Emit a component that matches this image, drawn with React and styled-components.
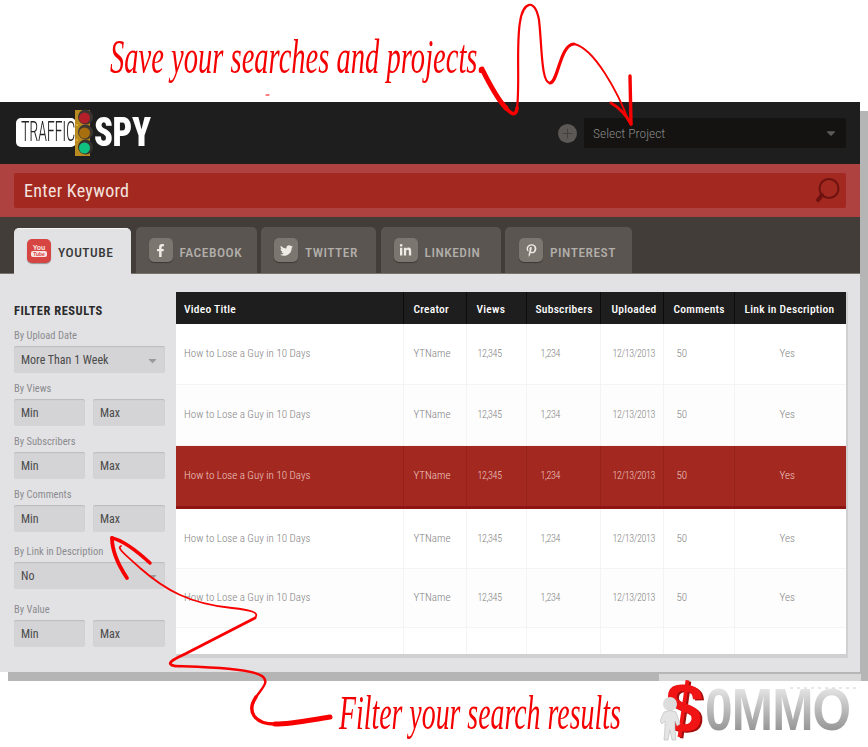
import React from "react";
import styled, { createGlobalStyle } from "styled-components";
import { FaFacebookF, FaTwitter, FaLinkedinIn, FaPinterestP, FaCaretDown } from "react-icons/fa";
import { Plus } from "lucide-react";

const uiFont = `"Roboto", "Lato", sans-serif`;
const handFont = `"Liberation Serif", serif`;

const GlobalStyle = createGlobalStyle`
  html, body { margin: 0; padding: 0; background: #fff; }
  * { box-sizing: border-box; }
`;

const Page = styled.div`
  position: relative;
  width: 868px;
  height: 747px;
  overflow: hidden;
  font-family: ${uiFont};
  font-stretch: 75%;
`;

const TopNote = styled.div`
  height: 102px;
  padding: 33px 0 0 110px;
`;

const HandText = styled.div`
  width: ${(p) => p.width}px;
  color: #f50000;
  font-family: ${handFont};
  font-style: italic;
  font-size: ${(p) => p.size}px;
  line-height: 1;
  white-space: nowrap;
  transform-origin: left center;
  transform: scaleX(${(p) => p.squeeze});
`;

const Panel = styled.div`
  width: 860px;
  height: 570px;
  background: #e2e2e5;
  box-shadow: 8px 9px 0 #b5b5b5;
`;

const Header = styled.header`
  height: 62px;
  background: #1e1e1e;
  display: flex;
  align-items: center;
  padding: 0 14px 0 16px;
`;

const Logo = styled.div`
  display: flex;
  align-items: center;
  height: 47px;
  margin-top: -1px;
`;

const LogoBox = styled.div`
  width: 60px;
  height: 29px;
  background: #fff;
  border-radius: 5px;
  color: #222;
  padding-left: 5px;
`;

const LogoWord = styled.span`
  display: block;
  width: 51px;
  font-size: 27px;
  font-weight: 300;
  line-height: 29px;
  letter-spacing: -0.5px;
  white-space: nowrap;
  transform-origin: left center;
  transform: scaleX(0.61);
`;

const LogoSpy = styled.div`
  width: 57px;
  color: #fff;
  font-weight: 900;
  font-size: 41px;
  letter-spacing: -0.5px;
  line-height: 1;
  transform-origin: left center;
  transform: scaleX(0.84);
`;

const ProjectArea = styled.div`
  margin-left: auto;
  display: flex;
  align-items: center;
  gap: 7px;
`;

const AddButton = styled.div`
  width: 19px;
  height: 19px;
  border-radius: 50%;
  background: #5c5855;
  color: #35312e;
  display: flex;
  align-items: center;
  justify-content: center;
`;

const ProjectSelect = styled.div`
  width: 262px;
  height: 30px;
  background: #141311;
  border-radius: 2px;
  color: #8b8b88;
  font-size: 13.5px;
  font-weight: 300;
  display: flex;
  align-items: center;
  justify-content: space-between;
  padding: 0 8px 0 9px;
`;

const SearchBand = styled.div`
  height: 53px;
  background: #ad4240;
  padding: 9px 14px;
`;

const SearchBox = styled.div`
  height: 35px;
  background: #a32820;
  border-radius: 2px;
  color: #f3e3df;
  font-size: 18px;
  font-weight: 400;
  letter-spacing: 0.3px;
  display: flex;
  align-items: center;
  justify-content: space-between;
  padding: 0 5px 0 10px;
`;

const TabBand = styled.nav`
  height: 57px;
  background: #423d39;
  box-shadow: inset 0 -1px 0 #77736f;
  padding: 11px 0 0 14px;
  display: flex;
  align-items: flex-end;
  gap: 4.5px;
`;

const Tab = styled.div`
  width: ${(p) => p.width}px;
  height: 46px;
  border-radius: 5px 5px 0 0;
  background: ${(p) => (p.active ? "#e2e2e5" : "#5a5551")};
  border-top: ${(p) => (p.active ? "1px solid #f4f4f4" : "none")};
  margin-bottom: ${(p) => (p.active ? 0 : 1)}px;
  color: ${(p) => (p.active ? "#3a3a3a" : "#b2aeaa")};
  display: flex;
  align-items: center;
  gap: 7px;
  padding: 0 0 ${(p) => (p.active ? 2 : 0)}px ${(p) => p.inset}px;
  font-size: 13.5px;
  font-weight: 500;
  letter-spacing: 0.5px;
`;

const TabLabel = styled.span`
  margin-top: 3px;
`;

const TabIcon = styled.div`
  width: 24px;
  height: 24px;
  border-radius: 5px;
  background: ${(p) => (p.active ? "#d64541" : "#7b7670")};
  box-shadow: 0 1px 1px rgba(0, 0, 0, 0.35);
  color: ${(p) => (p.active ? "#fbe5e3" : "#eeebe2")};
  display: flex;
  flex-direction: column;
  align-items: center;
  justify-content: center;
  font-size: 13px;
`;

const YouText = styled.span`
  font-family: "Liberation Sans", sans-serif;
  font-size: 7px;
  font-weight: 700;
  line-height: 7px;
  letter-spacing: 0;
`;

const TubeText = styled.span`
  font-family: "Liberation Sans", sans-serif;
  font-size: 5px;
  font-weight: 700;
  line-height: 6px;
  letter-spacing: 0;
  padding: 0 2px;
  border-radius: 2px;
  background: #fbe5e3;
  color: #d64541;
`;

const Content = styled.div`
  height: 398px;
  display: flex;
`;

const Sidebar = styled.aside`
  width: 176px;
  padding: 29px 11px 0 14px;
`;

const SideTitle = styled.div`
  font-size: 12.5px;
  font-weight: 700;
  letter-spacing: 0.5px;
  line-height: 15px;
  color: #2b2b2b;
  margin-bottom: 11px;
`;

const FilterLabel = styled.div`
  font-size: 10.5px;
  font-weight: 400;
  line-height: 12px;
  height: 17px;
  padding-top: 1px;
  margin-top: ${(p) => p.gap}px;
  color: #8b8b8e;
  white-space: nowrap;
`;

const FieldRow = styled.div`
  display: grid;
  grid-template-columns: 71px 72px;
  column-gap: 8px;
`;

const Field = styled.div`
  height: 27px;
  background: #d4d3d5;
  border-radius: 2px;
  box-shadow: inset 0 1px 1px rgba(0, 0, 0, 0.12);
  color: #4a4a4a;
  font-size: 12px;
  line-height: 29px;
  padding-left: 7px;
`;

const SelectField = styled(Field)`
  display: flex;
  justify-content: space-between;
  align-items: center;
  line-height: 23px;
  padding: 2px 6px 0 7px;
`;

const Caret = styled.span`
  color: ${(p) => p.color};
  display: flex;
  font-size: ${(p) => p.size}px;
`;

const TableWrap = styled.div`
  margin-top: 18px;
  width: 672px;
  height: 366px;
  border-right: 2px solid #d0d0d2;
  border-bottom: 4px solid #d0d0d2;
  background: #fff;
  overflow: hidden;
`;

const Table = styled.table`
  table-layout: fixed;
  width: 670px;
  border-collapse: collapse;
`;

const HeadCell = styled.th`
  height: 32px;
  background: #1e1e1e;
  border-left: 1px solid #0c0c0c;
  color: #fff;
  font-size: 11.5px;
  font-weight: 500;
  letter-spacing: 0.25px;
  text-align: left;
  padding: 1px 0 0 ${(p) => p.pad}px;
  white-space: nowrap;
  overflow: hidden;
  &:first-child { border-left: none; }
`;

const Row = styled.tr`
  height: ${(p) => p.height}px;
  background: ${(p) => (p.selected ? "#a32820" : p.tint ? "#fdfdfd" : "#fff")};
  border-bottom: ${(p) => (p.selected ? "3px solid #8e1512" : "1px solid #f5f3f3")};
`;

const Cell = styled.td`
  border-left: 1px solid ${(p) => (p.selected ? "#96221b" : "#f5f3f3")};
  color: ${(p) => (p.selected ? "#eec9c4" : "#828282")};
  font-size: ${(p) => (p.numeric ? 10 : 11)}px;
  letter-spacing: ${(p) => (p.numeric ? -0.35 : 0)}px;
  font-weight: 300;
  text-align: ${(p) => p.align};
  padding: 0 ${(p) => p.rightPad || 0}px 0 ${(p) => p.pad}px;
  white-space: nowrap;
  &:first-child { border-left: none; }
`;

const Footer = styled.footer`
  height: 75px;
  padding: 17px 0 0 339px;
`;

const Overlay = styled.svg`
  position: absolute;
  left: 0;
  top: 0;
  pointer-events: none;
`;

const SommoLogo = styled.div`
  position: absolute;
  left: 659px;
  top: 674px;
  width: 202px;
  height: 70px;
  background: linear-gradient(#d8d8d8 0 7px, #fff 7px);
`;

const Dollar = styled.span`
  position: absolute;
  left: 5px;
  top: -1px;
  color: #f01414;
  font-family: "Liberation Sans", sans-serif;
  font-weight: 700;
  font-size: 70px;
  line-height: 70px;
  text-shadow: 2px 1px 0 #a50d0d;
  transform: rotate(8deg);
`;

const Ommo = styled.span`
  position: absolute;
  left: 46px;
  top: 2px;
  font-family: "Liberation Sans", sans-serif;
  font-weight: 700;
  font-size: 59px;
  line-height: 68px;
  letter-spacing: -1px;
  white-space: nowrap;
  transform-origin: left center;
  transform: scaleX(0.84);
  background: linear-gradient(#e2e2e2 20%, #b4b4b4 55%, #8f8f8f 85%);
  -webkit-background-clip: text;
  background-clip: text;
  color: transparent;
`;

const Figure = styled.svg`
  position: absolute;
  left: 1px;
  top: 23px;
`;

const columns = [
  { title: "Video Title", width: 227, headPad: 8, pad: 8, align: "left" },
  { title: "Creator", width: 63, headPad: 10, pad: 10, align: "left" },
  { title: "Views", width: 60, headPad: 10, pad: 11, align: "left", numeric: true },
  { title: "Subscribers", width: 74, headPad: 9, pad: 14, align: "left", numeric: true },
  { title: "Uploaded", width: 63, headPad: 11, pad: 12, align: "left", numeric: true },
  { title: "Comments", width: 71, headPad: 10, pad: 13, align: "left" },
  { title: "Link in Description", width: 112, headPad: 10, pad: 0, rightPad: 6, align: "center" },
];

const rowValues = ["How to Lose a Guy in 10 Days", "YTName", "12,345", "1,234", "12/13/2013", "50", "Yes"];

const rows = [
  { height: 60 },
  { height: 61, tint: true },
  { height: 62, selected: true },
  { height: 61 },
  { height: 59, tint: true },
];

const tabs = [
  { name: "YOUTUBE", width: 117, inset: 13, active: true },
  { name: "FACEBOOK", width: 121, inset: 13, icon: <FaFacebookF /> },
  { name: "TWITTER", width: 115, inset: 13, icon: <FaTwitter /> },
  { name: "LINKEDIN", width: 120, inset: 13, icon: <FaLinkedinIn /> },
  { name: "PINTEREST", width: 127, inset: 14, icon: <FaPinterestP /> },
];

const MinMax = () => (
  <FieldRow>
    <Field>Min</Field>
    <Field>Max</Field>
  </FieldRow>
);

const TrafficLight = () => (
  <svg width="19" height="47" viewBox="0 0 19 47" style={{ flex: "none", marginLeft: -1 }}>
    <rect x="0" y="1" width="15" height="46" fill="#b98a1f" />
    <circle cx="10.5" cy="8" r="7.5" fill="#3a3532" />
    <circle cx="10.5" cy="23" r="7.5" fill="#3f3830" />
    <circle cx="10.5" cy="38" r="7.5" fill="#35312e" />
    <circle cx="9.5" cy="9" r="5.5" fill="#b3202a" />
    <circle cx="9.5" cy="24" r="5.5" fill="#a86f10" />
    <circle cx="9.5" cy="39" r="5.5" fill="#10c080" />
    <circle cx="2" cy="16" r="1" fill="#e8b93a" />
    <circle cx="2" cy="31" r="1" fill="#e8b93a" />
  </svg>
);

const SearchIcon = () => (
  <svg width="26" height="26" viewBox="0 0 26 26">
    <circle cx="14" cy="10.5" r="9.5" fill="none" stroke="#6e1210" strokeWidth="2" />
    <path d="M7 17 L3 22" stroke="#6e1210" strokeWidth="4" strokeLinecap="round" />
  </svg>
);

const App = () => (
  <Page>
    <GlobalStyle />
    <TopNote>
      <HandText size={48} squeeze={0.595} width={370}>Save your searches and projects.</HandText>
    </TopNote>

    <Panel>
      <Header>
        <Logo>
          <LogoBox><LogoWord>TRAFFIC</LogoWord></LogoBox>
          <TrafficLight />
          <LogoSpy>SPY</LogoSpy>
        </Logo>
        <ProjectArea>
          <AddButton><Plus size={15} strokeWidth={1} /></AddButton>
          <ProjectSelect>
            Select Project
            <Caret color="#5c5a58" size={14}><FaCaretDown /></Caret>
          </ProjectSelect>
        </ProjectArea>
      </Header>

      <SearchBand>
        <SearchBox>
          Enter Keyword
          <SearchIcon />
        </SearchBox>
      </SearchBand>

      <TabBand>
        {tabs.map((tab) => (
          <Tab key={tab.name} width={tab.width} inset={tab.inset} active={tab.active}>
            <TabIcon active={tab.active}>
              {tab.active ? (
                <>
                  <YouText>You</YouText>
                  <TubeText>Tube</TubeText>
                </>
              ) : (
                tab.icon
              )}
            </TabIcon>
            <TabLabel>{tab.name}</TabLabel>
          </Tab>
        ))}
      </TabBand>

      <Content>
        <Sidebar>
          <SideTitle>FILTER RESULTS</SideTitle>
          <FilterLabel gap={0}>By Upload Date</FilterLabel>
          <SelectField>
            More Than 1 Week
            <Caret color="#9a9a9c" size={13}><FaCaretDown /></Caret>
          </SelectField>
          <FilterLabel gap={9}>By Views</FilterLabel>
          <MinMax />
          <FilterLabel gap={9}>By Subscribers</FilterLabel>
          <MinMax />
          <FilterLabel gap={9}>By Comments</FilterLabel>
          <MinMax />
          <FilterLabel gap={13}>By Link in Description</FilterLabel>
          <SelectField>
            No
            <Caret color="#9a9a9c" size={13}><FaCaretDown /></Caret>
          </SelectField>
          <FilterLabel gap={14}>By Value</FilterLabel>
          <MinMax />
        </Sidebar>

        <TableWrap>
          <Table>
            <colgroup>
              {columns.map((col) => (
                <col key={col.title} style={{ width: col.width }} />
              ))}
            </colgroup>
            <thead>
              <tr>
                {columns.map((col) => (
                  <HeadCell key={col.title} pad={col.headPad}>
                    {col.title}
                  </HeadCell>
                ))}
              </tr>
            </thead>
            <tbody>
              {rows.map((row, i) => (
                <Row key={i} height={row.height} selected={row.selected} tint={row.tint}>
                  {columns.map((col, c) => (
                    <Cell
                      key={col.title}
                      pad={col.pad}
                      rightPad={col.rightPad}
                      align={col.align}
                      numeric={col.numeric}
                      selected={row.selected}
                    >
                      {rowValues[c]}
                    </Cell>
                  ))}
                </Row>
              ))}
              <Row height={27}>
                {columns.map((col) => (
                  <Cell key={col.title} pad={col.pad} align={col.align} />
                ))}
              </Row>
            </tbody>
          </Table>
        </TableWrap>
      </Content>
    </Panel>

    <Footer>
      <HandText size={48} squeeze={0.58} width={285}>Filter your search results</HandText>
    </Footer>

    <SommoLogo>
      <Ommo>0MMO</Ommo>
      <Dollar>$</Dollar>
      <Figure width="22" height="44" viewBox="0 0 22 44">
        <circle cx="10" cy="7" r="7" fill="#dcdcdc" />
        <path d="M4 15 Q10 12 16 15 L20 27 L17 29 L15 24 L15 33 L16 43 L12 43 L10 33 L8 43 L4 43 L5 30 L5 24 L2 27 L0 24 Z" fill="#e4e4e4" stroke="#bbb" strokeWidth="0.6" />
      </Figure>
    </SommoLogo>

    <Overlay width="868" height="747" viewBox="0 0 868 747">
      <path d="M790 688 H860" stroke="#c4c4c4" strokeWidth="0.8" strokeDasharray="3 4" />
      <g fill="none" stroke="#f80000" strokeLinecap="round" strokeLinejoin="round">
        <path d="M266 95 H269" strokeWidth="1" />
        <path d="M482 69 C490 85 498 100 506 108" strokeWidth="5" />
        <path d="M506 108 C511 114 516 117 517 108" strokeWidth="3.6" />
        <path d="M517 108 C520 85 516 45 520 22 C523 2 535 -3 539 20 C542 45 541 83 550 83" strokeWidth="2.2" />
        <path d="M550 83 C558 83 560 44 574 44" strokeWidth="3.2" />
        <path d="M574 44 C594 48 618 92 629 122" strokeWidth="1.8" />
        <path d="M630 76 L631 124" strokeWidth="3.4" />
        <path d="M611 103 C620 108 626 115 631 124" strokeWidth="3" />
        <path d="M330 717 C310 720 292 724 275 724" strokeWidth="5" />
        <path d="M275 724 C255 724 246 712 256 697" strokeWidth="3.4" />
        <path d="M256 697 C262 688 270 682 262 676 C250 668 200 667 175 666" strokeWidth="2.4" />
        <path d="M175 666 C165 664 172 660 185 654 L255 618" strokeWidth="2.8" />
        <path d="M255 618 C260 612 250 610 232 608 C190 604 165 590 140 568 C127 556 116 548 121 546" strokeWidth="1.8" />
        <path d="M150 563 C138 552 125 541 112 538" strokeWidth="3.4" />
        <path d="M112 538 C112 552 119 566 127 578" strokeWidth="3.8" />
      </g>
    </Overlay>
  </Page>
);

export default App;
